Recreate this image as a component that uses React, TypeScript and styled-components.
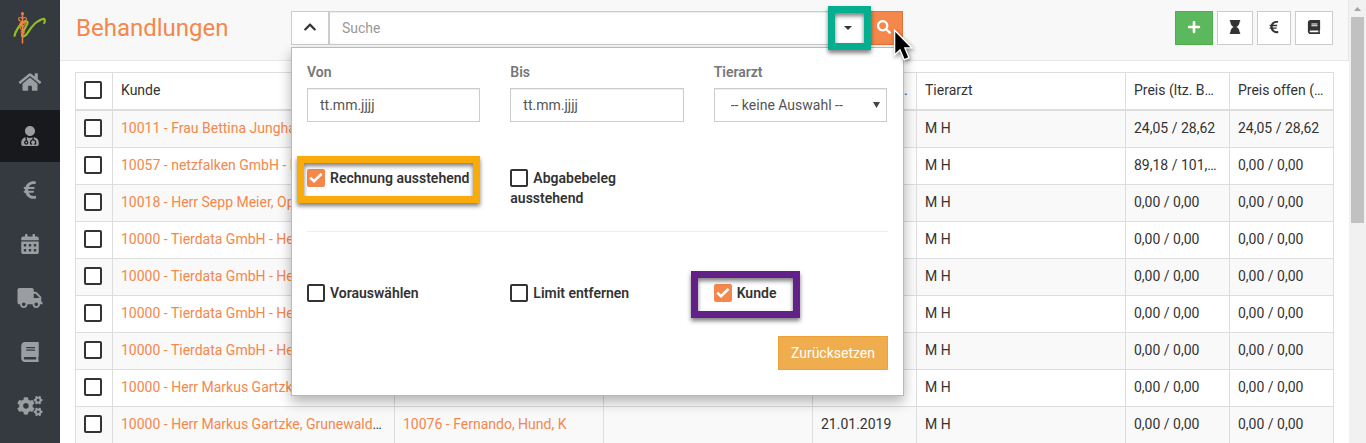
import React from "react";
import styled, { createGlobalStyle, css } from "styled-components";
import {
  FaBook,
  FaCalendarAlt,
  FaChevronUp,
  FaCogs,
  FaEuroSign,
  FaHome,
  FaHourglass,
  FaPlus,
  FaSearch,
  FaTruck,
  FaUserMd,
} from "react-icons/fa";

const color = {
  accent: "#f4874b",
  accentDark: "#e0743a",
  text: "#333",
  border: "#ccc",
  tableBorder: "#ddd",
};

const GlobalStyle = createGlobalStyle`
  * { box-sizing: border-box; }
  body {
    margin: 0;
    font-family: Roboto, "Liberation Sans", sans-serif;
    font-size: 14px;
    line-height: 20px;
    color: ${color.text};
    background: #fff;
  }
  button, input, select { font: inherit; color: inherit; margin: 0; }
  a { color: ${color.accent}; text-decoration: none; }
`;

const Shell = styled.div`
  display: flex;
  height: 100vh;
  overflow: hidden;
`;

const Sidebar = styled.nav`
  flex: none;
  width: 60px;
  display: flex;
  flex-direction: column;
  gap: 2px;
  background: #353a41;
`;

const Logo = styled.a`
  display: block;
  height: 54px;
  svg { display: block; }
`;

const NavLink = styled.a<{ $active?: boolean }>`
  flex: none;
  height: 52px;
  display: flex;
  align-items: center;
  justify-content: center;
  color: #9b9ea1;
  background: ${(p) => (p.$active ? "#18191c" : "transparent")};
  svg { width: 26px; height: 20px; }
`;

const Main = styled.div`
  flex: 1;
  min-width: 0;
`;

const Header = styled.header`
  display: grid;
  grid-template-columns: 200px minmax(0, 612px) 1fr;
  column-gap: 15px;
  align-items: start;
  height: 61px;
  padding: 11px 15px 0 16px;
  background: #f8f8f8;
  border-right: 1px solid #e7e7e7;
  border-bottom: 1px solid #e7e7e7;
`;

const Title = styled.h1`
  margin: 0;
  font-size: 24px;
  line-height: 34px;
  font-weight: 400;
  color: ${color.accent};
`;

const Search = styled.div`
  position: relative;
  display: flex;
  height: 34px;
`;

const fieldBox = css`
  height: 34px;
  border: 1px solid ${color.border};
  border-radius: 0;
  background: #fff;
  box-shadow: inset 0 1px 1px rgba(0, 0, 0, 0.075);
  outline: none;
`;

const SearchInput = styled.input`
  ${fieldBox}
  flex: 1;
  min-width: 0;
  padding: 0 12px;
  border-right: 0;
  &::placeholder { color: #999; opacity: 1; }
`;

type Tone = "default" | "primary" | "success" | "warning";
const tones: Record<Tone, [string, string, string]> = {
  default: ["#fff", color.border, color.text],
  primary: [color.accent, color.accentDark, "#fff"],
  success: ["#5cb85c", "#4cae4c", "#fff"],
  warning: ["#f0ad4e", "#eea236", "#fff"],
};

const Button = styled.button<{ $tone?: Tone; $width?: number }>`
  flex: none;
  display: flex;
  align-items: center;
  justify-content: center;
  width: ${(p) => (p.$width ? `${p.$width}px` : "auto")};
  height: 34px;
  padding: 0 ${(p) => (p.$width ? 0 : 12)}px;
  border: 1px solid ${(p) => tones[p.$tone ?? "default"][1]};
  border-radius: 0;
  background: ${(p) => tones[p.$tone ?? "default"][0]};
  color: ${(p) => tones[p.$tone ?? "default"][2]};
  svg { width: 14px; height: 14px; margin-bottom: 2px; }
`;

const FilterToggle = styled(Button)`
  border-left: 0;
  border-right: 0;
  svg { width: 8px; height: 4px; margin: 0; }
`;

const Actions = styled.div`
  display: flex;
  justify-content: flex-end;
  gap: 4px;
`;

const FilterPanel = styled.form`
  position: absolute;
  z-index: 2;
  top: 36px;
  left: 0;
  right: -1px;
  padding: 14px 15px 15px;
  background: #fff;
  border: 1px solid #b9b9b9;
  box-shadow: 0 6px 12px rgba(0, 0, 0, 0.3);
`;

const FilterRow = styled.div`
  display: grid;
  grid-template-columns: repeat(3, minmax(0, 1fr));
  column-gap: 30px;
  margin-right: 1px;
`;

const CheckRow = styled(FilterRow)`
  padding-top: 46px;
`;

const Field = styled.label`
  position: relative;
  display: flex;
  flex-direction: column;
  gap: 6px;
  font-weight: 600;
  color: #777;
`;

const DateInput = styled.input`
  ${fieldBox}
  width: 100%;
  padding: 0 12px;
  font-weight: 400;
  color: #555;
  &::placeholder { color: #555; opacity: 1; }
`;

const Select = styled.select`
  ${fieldBox}
  width: 100%;
  padding: 0 16px;
  font-weight: 400;
  color: #555;
  appearance: none;
`;

const SelectArrow = styled.svg`
  position: absolute;
  right: 7px;
  bottom: 14px;
  pointer-events: none;
`;

const CheckLabel = styled.label`
  position: relative;
  font-weight: 600;
`;

const Box = styled.input.attrs({ type: "checkbox" })`
  appearance: none;
  flex: none;
  display: inline-block;
  width: 18px;
  height: 18px;
  border: 2px solid ${color.text};
  border-radius: 2px;
  background: #fff;
  vertical-align: middle;
  &:checked {
    border-color: ${color.accent};
    background: ${color.accent}
      url("data:image/svg+xml,%3Csvg xmlns='http://www.w3.org/2000/svg' viewBox='0 0 14 14'%3E%3Cpath d='M1.2 6.6 5 10.2 12.6 2.8' fill='none' stroke='white' stroke-width='2.6'/%3E%3C/svg%3E")
      center / 14px 14px no-repeat;
  }
`;

const LabelBox = styled(Box)`
  margin: -2px 5px 0 0;
`;

const Divider = styled.hr`
  margin: 23px 0 5px;
  border: 0;
  border-top: 1px solid #eee;
`;

const PanelFooter = styled.div`
  display: flex;
  justify-content: flex-end;
  padding: 33px 0 10px;
`;

/* Coloured frames that point out single controls. */
const Marker = styled.span<{ $color: string; $inset: string }>`
  position: absolute;
  z-index: 3;
  inset: ${(p) => p.$inset};
  border: 7px solid ${(p) => p.$color};
  filter: drop-shadow(0 3px 2px rgba(0, 0, 0, 0.5));
  pointer-events: none;
`;

const Pointer = styled.svg`
  position: absolute;
  z-index: 4;
  top: 16px;
  right: -14px;
  filter: drop-shadow(1px 2px 2px rgba(0, 0, 0, 0.45));
  pointer-events: none;
`;

const Content = styled.main`
  padding: 11px 15px;
`;

const Table = styled.table`
  width: 100%;
  table-layout: fixed;
  border-collapse: separate;
  border-spacing: 0;
  border-top: 1px solid ${color.tableBorder};
  border-left: 1px solid ${color.tableBorder};
`;

const Col = styled.col<{ $width?: string }>`
  width: ${(p) => p.$width ?? "auto"};
`;

const cell = css`
  padding: 0 8px 2px;
  text-align: left;
  vertical-align: middle;
  overflow: hidden;
  white-space: nowrap;
  text-overflow: ellipsis;
  border-right: 1px solid ${color.tableBorder};
`;

const Th = styled.th`
  ${cell}
  height: 38px;
  font-weight: 400;
  border-bottom: 2px solid ${color.tableBorder};
`;

const Td = styled.td`
  ${cell}
  height: 37px;
  border-bottom: 1px solid ${color.tableBorder};
`;

const Row = styled.tr`
  &:nth-child(odd) { background: #f9f9f9; }
`;

const CellBox = styled(Box)`
  display: block;
`;

const Scrollbar = styled.div`
  flex: none;
  width: 17px;
  display: flex;
  flex-direction: column;
  align-items: center;
  background: #f1f1f1;
`;

const ScrollArrow = styled.div`
  height: 17px;
  display: flex;
  align-items: center;
`;

const ScrollThumb = styled.div`
  width: 13px;
  height: 206px;
  background: #c1c1c1;
`;

const navItems = [
  { label: "Startseite", Icon: FaHome },
  { label: "Behandlungen", Icon: FaUserMd, active: true },
  { label: "Rechnungen", Icon: FaEuroSign },
  { label: "Kalender", Icon: FaCalendarAlt },
  { label: "Lieferungen", Icon: FaTruck },
  { label: "Berichte", Icon: FaBook },
  { label: "Einstellungen", Icon: FaCogs },
];

type Treatment = {
  customer: string;
  animal?: string;
  date?: string;
  last: string;
  open: string;
};

const zero = "0,00 / 0,00";
const treatments: Treatment[] = [
  { customer: "10011 - Frau Bettina Junghans", last: "24,05 / 28,62", open: "24,05 / 28,62" },
  { customer: "10057 - netzfalken GmbH - Herr", last: "89,18 / 101,45", open: zero },
  { customer: "10018 - Herr Sepp Meier, Oppenheim", last: zero, open: zero },
  { customer: "10000 - Tierdata GmbH - Herr", last: zero, open: zero },
  { customer: "10000 - Tierdata GmbH - Herr", last: zero, open: zero },
  { customer: "10000 - Tierdata GmbH - Herr", last: zero, open: zero },
  { customer: "10000 - Tierdata GmbH - Herr", last: zero, open: zero },
  { customer: "10000 - Herr Markus Gartzke", last: zero, open: zero },
  {
    customer: "10000 - Herr Markus Gartzke, Grunewaldstraße",
    animal: "10076 - Fernando, Hund, K",
    date: "21.01.2019",
    last: zero,
    open: zero,
  },
];

function LogoMark() {
  return (
    <svg width="60" height="54" viewBox="0 0 60 54" fill="none" aria-hidden="true">
      <path
        d="M14.5 35.8C15.5 31.5 19 24.8 24 22C26.2 20.8 28.2 21.2 27.2 23.8C26 27 22.2 32.4 22 35.2C22 37.6 25.2 36 26.6 34.2C29 31.2 32.4 24.6 37.5 21.6C40.5 20 42 18.6 43.6 18.8C45.2 19 45 21.4 44.2 23"
        stroke="#93c01f"
        strokeWidth="2.2"
        strokeLinecap="round"
      />
      <g stroke="#ee8144">
        <path d="M22.5 13V43.5" strokeWidth="1.5" />
        <path
          d="M22.5 18.4C19 16.2 17.8 18.6 19 20.2C20.2 21.8 25.6 21.2 25.2 24C24.8 26.6 20.2 25.4 20.4 28.2C20.6 30.6 24.6 30 24.2 32.6C23.9 34.2 21 34 21.4 36.4M22.5 18.4C26 16.2 27.2 18.6 26 20.2C24.8 21.8 19.6 21.2 20 24C20.4 26.6 24.6 25.6 24.4 28.2C24.2 30.4 20.6 30.4 21 32.6"
          strokeWidth="1.1"
        />
      </g>
      <circle cx="22.5" cy="13.4" r="1.5" fill="#ee8144" />
    </svg>
  );
}

type CheckProps = { label: string; checked?: boolean; children?: React.ReactNode };

function Check({ label, checked, children }: CheckProps) {
  return (
    <div>
      <CheckLabel>
        <LabelBox defaultChecked={checked} />
        {label}
        {children}
      </CheckLabel>
    </div>
  );
}

function Filters() {
  return (
    <FilterPanel onSubmit={(e) => e.preventDefault()}>
      <FilterRow>
        <Field>
          Von
          <DateInput type="text" placeholder="tt.mm.jjjj" />
        </Field>
        <Field>
          Bis
          <DateInput type="text" placeholder="tt.mm.jjjj" />
        </Field>
        <Field>
          Tierarzt
          <Select>
            <option>-- keine Auswahl --</option>
          </Select>
          <SelectArrow width="7" height="6" viewBox="0 0 7 6" aria-hidden="true">
            <path d="M0 0H7L3.5 6Z" fill="#444" />
          </SelectArrow>
        </Field>
      </FilterRow>
      <CheckRow>
        <Check label="Rechnung ausstehend" checked>
          <Marker $color="#f9ab0b" $inset="-14px -11px -17px -10px" />
        </Check>
        <Check label="Abgabebeleg ausstehend" />
      </CheckRow>
      <Divider />
      <CheckRow>
        <Check label="Vorauswählen" />
        <Check label="Limit entfernen" />
        <Check label="Kunde" checked>
          <Marker $color="#632089" $inset="-14px -24px -17px -23px" />
        </Check>
      </CheckRow>
      <PanelFooter>
        <Button type="reset" $tone="warning">Zurücksetzen</Button>
      </PanelFooter>
    </FilterPanel>
  );
}

export default function App() {
  return (
    <>
      <GlobalStyle />
      <Shell>
        <Sidebar>
          <Logo href="#" aria-label="Startseite">
            <LogoMark />
          </Logo>
          {navItems.map(({ label, Icon, active }) => (
            <NavLink key={label} href="#" aria-label={label} $active={active}>
              <Icon />
            </NavLink>
          ))}
        </Sidebar>
        <Main>
          <Header>
            <Title>Behandlungen</Title>
            <Search>
              <Button $width={38} aria-label="Einklappen">
                <FaChevronUp />
              </Button>
              <SearchInput type="text" placeholder="Suche" aria-label="Suche" />
              <FilterToggle $width={32} aria-label="Filter">
                <svg viewBox="0 0 8 4">
                  <path d="M0 0H8L4 4Z" fill="currentColor" />
                </svg>
              </FilterToggle>
              <Button $tone="primary" $width={39} aria-label="Suchen">
                <FaSearch />
              </Button>
              <Filters />
              <Marker $color="#04ae8f" $inset="-5px 32px -5px 537px" />
              <Pointer width="26" height="38" viewBox="0 0 26 38" aria-hidden="true">
                <path
                  d="M3.6 3.2V28L9 23L13.2 32.8L18 30.6L13.9 20.9H21Z"
                  fill="#000"
                  stroke="#fff"
                  strokeWidth="1.4"
                />
              </Pointer>
            </Search>
            <Actions>
              <Button $tone="success" $width={38} aria-label="Neu"><FaPlus /></Button>
              <Button $width={36} aria-label="Wartend"><FaHourglass /></Button>
              <Button $width={34} aria-label="Abrechnen"><FaEuroSign /></Button>
              <Button $width={38} aria-label="Buch"><FaBook /></Button>
            </Actions>
          </Header>
          <Content>
            <Table>
              <colgroup>
                <Col $width="37px" />
                <Col />
                <Col $width="209px" />
                <Col $width="209px" />
                <Col $width="104px" />
                <Col $width="209px" />
                <Col $width="104px" />
                <Col $width="104px" />
              </colgroup>
              <thead>
                <tr>
                  <Th><CellBox aria-label="Alle auswählen" /></Th>
                  <Th>Kunde</Th>
                  <Th />
                  <Th />
                  <Th>Behandlung (ltz.)</Th>
                  <Th>Tierarzt</Th>
                  <Th>Preis (ltz. Beleg)</Th>
                  <Th>Preis offen (ges.)</Th>
                </tr>
              </thead>
              <tbody>
                {treatments.map((t, i) => (
                  <Row key={i}>
                    <Td><CellBox aria-label={t.customer} /></Td>
                    <Td><a href="#">{t.customer}</a></Td>
                    <Td>{t.animal && <a href="#">{t.animal}</a>}</Td>
                    <Td />
                    <Td>{t.date}</Td>
                    <Td>M H</Td>
                    <Td>{t.last}</Td>
                    <Td>{t.open}</Td>
                  </Row>
                ))}
              </tbody>
            </Table>
          </Content>
        </Main>
        <Scrollbar aria-hidden="true">
          <ScrollArrow>
            <svg width="7" height="4" viewBox="0 0 7 4">
              <path d="M0 4H7L3.5 0Z" fill="#a3a3a3" />
            </svg>
          </ScrollArrow>
          <ScrollThumb />
        </Scrollbar>
      </Shell>
    </>
  );
}
